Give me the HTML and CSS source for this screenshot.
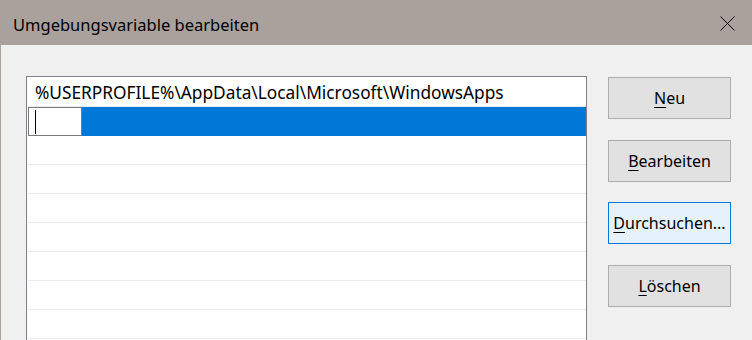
FILE: index.html
```html
<!DOCTYPE html>
<html lang="de">
<head>
    <meta charset="UTF-8">
    <title>Umgebungsvariable bearbeiten</title>
    <link rel="stylesheet" href="styles.css">
</head>
<body>
    <div class="window">
        <!-- Title bar -->
        <header class="title-bar">
            <span class="title-text">Umgebungsvariable bearbeiten</span>
            <svg class="close-icon" width="15" height="15" viewBox="0 0 15 15">
                <path d="M0.5 0.5 L14.5 14.5 M14.5 0.5 L0.5 14.5" stroke="#000" stroke-width="1" fill="none"/>
            </svg>
        </header>

        <main class="dialog-body">
            <!-- List of path entries -->
            <div class="list-box">
                <div class="list-row">%USERPROFILE%\AppData\Local\Microsoft\WindowsApps</div>
                <div class="list-row selected">
                    <div class="edit-box"><span class="caret"></span></div>
                </div>
                <div class="list-row"></div>
                <div class="list-row"></div>
                <div class="list-row"></div>
                <div class="list-row"></div>
                <div class="list-row"></div>
                <div class="list-row"></div>
                <div class="list-row"></div>
            </div>

            <!-- Action buttons -->
            <div class="button-column">
                <button class="dlg-button"><u>N</u>eu</button>
                <button class="dlg-button"><u>B</u>earbeiten</button>
                <button class="dlg-button focused"><u>D</u>urchsuchen...</button>
                <button class="dlg-button"><u>L</u>öschen</button>
            </div>
        </main>
    </div>
</body>
</html>
```

FILE: styles.css
```css
/* Basic page reset */
body {
    margin: 0;
    padding: 0;
    font-family: "Noto Sans", "Open Sans", sans-serif;
    background-color: #f0f0f0;
    overflow: hidden;
}

/* Dialog window frame */
.window {
    height: 340px;
    border-left: 1px solid #aaa29e;
    background-color: #f0f0f0;
}

/* Title bar */
.title-bar {
    height: 45px;
    background-color: #aaa19d;
    display: flex;
    align-items: center;
    justify-content: space-between;
    padding: 0 17px 0 12px;
}

.title-text {
    font-size: 16.5px;
    color: #000;
    padding-top: 3px;
}

.close-icon {
    display: block;
    margin-top: 1px;
}

/* Main dialog area */
.dialog-body {
    display: flex;
    align-items: flex-start;
    gap: 21px;
    padding: 31px 0 0 25px;
}

/* List box with entries */
.list-box {
    width: 558px;
    height: 262px;
    border: 1px solid #7f7f8c;
    border-bottom: none;
    background-color: white;
    padding: 1px 0 0 1px;
    overflow: hidden;
}

.list-row {
    height: 28px;
    border-bottom: 1px solid #ececec;
    padding-left: 7px;
    font-size: 17.3px;
    line-height: 29px;
    color: #000;
    white-space: nowrap;
}

.list-row.selected {
    background-color: #0078d7;
    border-bottom-color: #0078d7;
    padding-left: 0;
}

/* Inline edit field inside selected row */
.edit-box {
    width: 52px;
    height: 27px;
    border: 1px solid #7a7a7a;
    background-color: white;
    position: relative;
}

.caret {
    position: absolute;
    left: 6px;
    top: 2px;
    width: 1px;
    height: 24px;
    background-color: #000;
}

/* Buttons on the right */
.button-column {
    display: flex;
    flex-direction: column;
    gap: 20.7px;
    margin-top: 1px;
}

.dlg-button {
    width: 123px;
    height: 42px;
    background-color: #e1e1e1;
    border: 1px solid #adadad;
    font-family: "Noto Sans", "Open Sans", sans-serif;
    font-size: 16px;
    color: #000;
    padding: 0;
    cursor: pointer;
}

.dlg-button u {
    text-decoration-thickness: 1px;
    text-underline-offset: 3px;
}

.dlg-button.focused {
    background-color: #e5f1fb;
    border-color: #0078d7;
}
```
